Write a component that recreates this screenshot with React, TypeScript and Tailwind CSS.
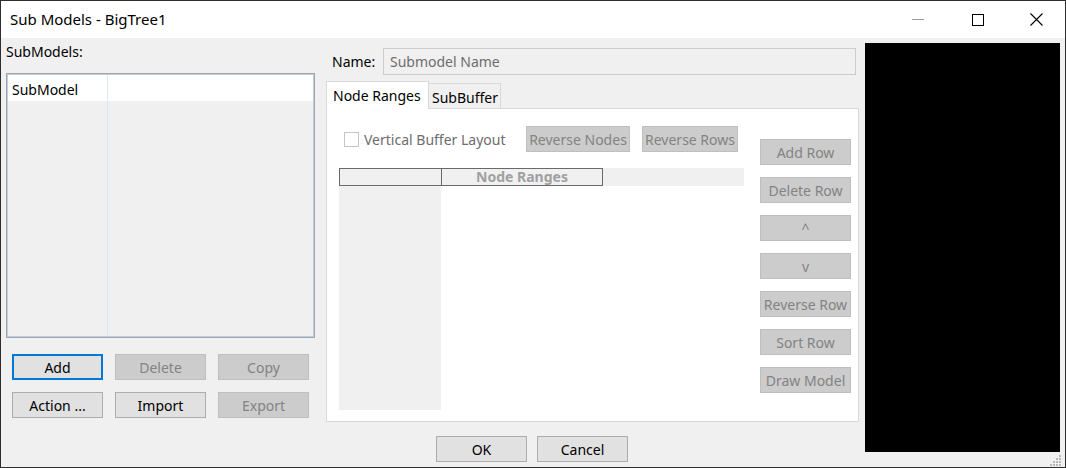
import React from 'react';

type BtnProps = {
  label: string;
  disabled?: boolean;
  focused?: boolean;
  className?: string;
};

function WinButton({ label, disabled, focused, className = '' }: BtnProps) {
  const look = disabled
    ? 'bg-[#cccccc] border border-[#bfbfbf] text-[#838383]'
    : focused
      ? 'bg-[#e1e1e1] border-2 border-[#0078d7] text-black'
      : 'bg-[#e1e1e1] border border-[#adadad] text-black';
  return (
    <div className={`h-[26px] flex items-center justify-center leading-none pt-px ${look} ${className}`}>
      {label}
    </div>
  );
}

const sideButtons = ['Add Row', 'Delete Row', '^', 'v', 'Reverse Row', 'Sort Row', 'Draw Model'];

export default function App() {
  return (
    <div className="w-[1066px] h-[468px] border border-[#2e2e2e] bg-[#f0f0f0] flex flex-col font-['Noto_Sans',sans-serif] text-[14px] text-black overflow-hidden">
      {/* Title bar */}
      <div className="h-[37px] bg-white flex items-center shrink-0">
        <div className="pl-[9px] text-[15px] flex-1">Sub Models - BigTree1</div>
        <div className="flex items-center h-full">
          <div className="w-[58px] h-full flex items-center justify-center pr-[4px]">
            <div className="w-[12px] h-px bg-[#9a9a9a]" />
          </div>
          <div className="w-[58px] h-full flex items-center justify-center">
            <div className="w-[12px] h-[12px] border border-black" />
          </div>
          <div className="w-[58px] h-full flex items-center justify-center">
            <svg width="13" height="13" viewBox="0 0 13 13">
              <path d="M0.5 0.5 L12.5 12.5 M12.5 0.5 L0.5 12.5" stroke="black" strokeWidth="1.1" />
            </svg>
          </div>
        </div>
      </div>

      {/* Body */}
      <div className="relative flex-1 grid grid-cols-[325px_534px_1fr] grid-rows-[1fr_46px]">
        {/* Left column */}
        <div className="col-start-1 row-start-1 flex flex-col">
          <div className="pl-[5px] pt-[4px] h-[24px] leading-[20px]">SubModels:</div>
          <div className="ml-[5px] mt-[11px] w-[309px] h-[265px] border border-[#a5a5a5]">
            <div className="w-full h-full border border-[#b9cde4] bg-[#f0f0f0] relative flex flex-col">
              <div className="h-[26px] bg-white flex items-center shrink-0">
                <div className="w-[100px] pl-[4px] pt-[2px] border-r border-[#dfe6ef] h-full flex items-center">SubModel</div>
              </div>
              <div className="flex-1 flex">
                <div className="w-[100px] border-r border-[#dfe6ef]" />
              </div>
            </div>
          </div>
          <div className="ml-[11px] mt-[16px] grid grid-cols-[91px_91px_91px] gap-x-[12px] gap-y-[12px]">
            <WinButton label="Add" focused />
            <WinButton label="Delete" disabled />
            <WinButton label="Copy" disabled />
            <WinButton label="Action ..." />
            <WinButton label="Import" />
            <WinButton label="Export" disabled />
          </div>
        </div>

        {/* Middle column */}
        <div className="col-start-2 row-start-1 flex flex-col">
          <div className="flex items-center pt-[10px] pr-[4px]">
            <div className="pl-[6px] w-[57px]">Name:</div>
            <div className="flex-1 h-[27px] border border-[#cccccc] bg-[#f0f0f0] flex items-center pl-[6px] text-[#6d6d6d]">
              Submodel Name
            </div>
          </div>
          <div className="flex items-end mt-[6px] h-[27px]">
            <div className="w-[103px] h-[28px] bg-white border border-b-0 border-[#d9d9d9] flex items-center pl-[6px] relative z-10 -mb-px">
              Node Ranges
            </div>
            <div className="w-[72px] h-[25px] bg-[#f0f0f0] border border-l-0 border-b-0 border-[#d9d9d9] flex items-center pl-[3px] pt-[2px]">
              SubBuffer
            </div>
          </div>
          <div className="w-[533px] h-[314px] bg-white border border-[#d9d9d9] flex pt-[17px] pl-[12px]">
            <div className="w-[405px] flex flex-col">
              <div className="flex items-center h-[26px]">
                <div className="ml-[5px] w-[15px] h-[15px] border border-[#c4c4c4] bg-white" />
                <div className="ml-[5px] text-[#6d6d6d] w-[162px]">Vertical Buffer Layout</div>
                <WinButton label="Reverse Nodes" disabled className="w-[104px]" />
                <WinButton label="Reverse Rows" disabled className="w-[96px] ml-[12px]" />
              </div>
              <div className="mt-[16px] flex flex-col">
                <div className="flex h-[18px] bg-[#f0f0f0]">
                  <div className="w-[103px] h-full border border-[#696969]" />
                  <div className="w-[161px] h-full border border-l-0 border-[#696969] flex items-center justify-center font-bold text-[#a0a0a0] leading-none">
                    Node Ranges
                  </div>
                </div>
                <div className="flex h-[224px]">
                  <div className="w-[102px] h-full bg-[#f0f0f0]" />
                </div>
              </div>
            </div>
            <div className="ml-[16px] mt-[13px] w-[91px] flex flex-col gap-[12px]">
              {sideButtons.map((b) => (
                <WinButton key={b} label={b} disabled />
              ))}
            </div>
          </div>
        </div>

        {/* Preview */}
        <div className="col-start-3 row-start-1 row-span-2 self-start mt-[5px] ml-[5px] mr-[5px] h-[409px] bg-black" />

        {/* OK / Cancel */}
        <div className="col-start-1 col-span-3 row-start-2 flex justify-center gap-[10px] pt-[14px] pr-[2px]">
          <WinButton label="OK" className="w-[91px]" />
          <WinButton label="Cancel" className="w-[91px]" />
        </div>

        {/* Resize grip */}
        <svg className="absolute right-[3px] bottom-[2px]" width="12" height="12" viewBox="0 0 12 12">
          {[
            [9, 1], [6, 4], [9, 4], [3, 7], [6, 7], [9, 7], [0, 10], [3, 10], [6, 10], [9, 10],
          ].map(([x, y]) => (
            <rect key={`${x}-${y}`} x={x} y={y} width="2" height="2" fill="#b8b8b8" />
          ))}
        </svg>
      </div>
    </div>
  );
}
